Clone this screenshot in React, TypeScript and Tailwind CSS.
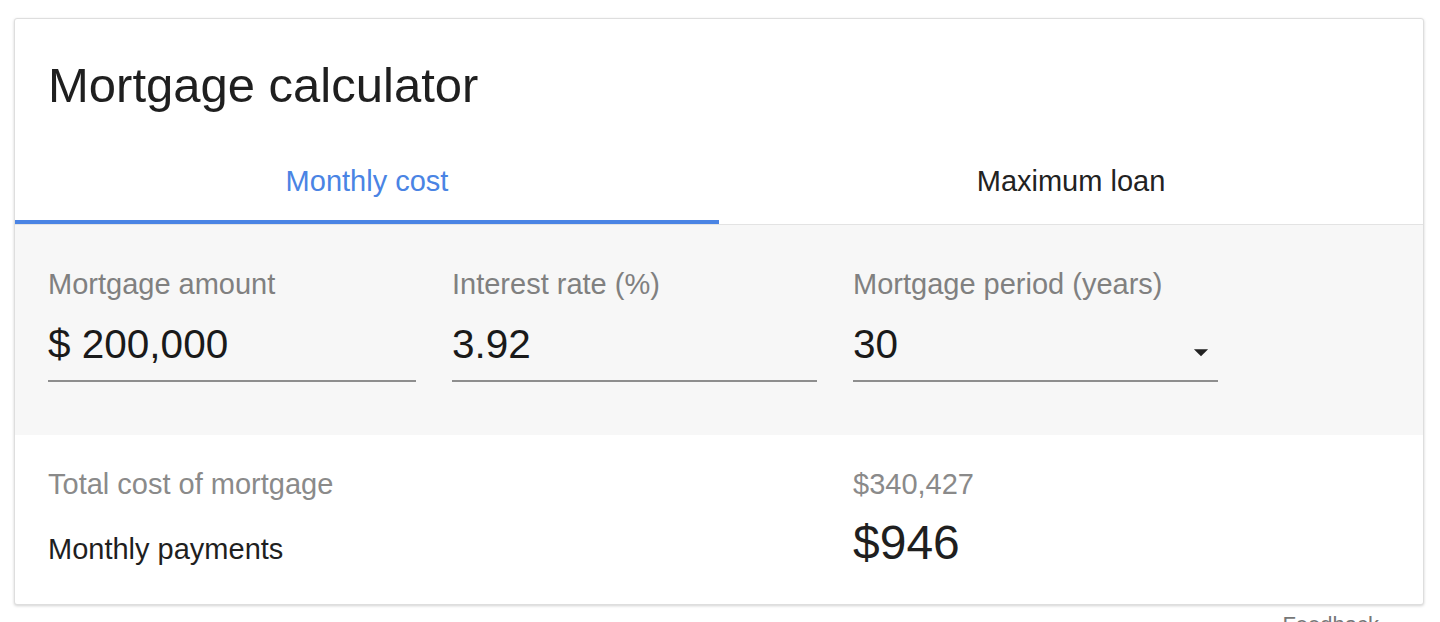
import React, { useState } from "react";

const font = { fontFamily: '"Liberation Sans", Arial, sans-serif' };

interface FieldProps {
  label: string;
  value: string;
  width: string;
  dropdown?: boolean;
}

function Field({ label, value, width, dropdown }: FieldProps) {
  return (
    <div className={`${width} flex flex-col`}>
      <div className="text-[29px] leading-[32px] text-[#808080]">{label}</div>
      <div className="mt-[20px] flex h-[48px] items-center justify-between">
        <span className="text-[40.5px] leading-[48px] text-[#1a1a1a]">{value}</span>
        {dropdown && (
          <svg viewBox="0 0 24 24" className="mt-[15px] h-[34px] w-[34px]" fill="#222">
            <path d="M7 10l5 5 5-5z" />
          </svg>
        )}
      </div>
      <div className="mt-[12px] h-[2px] bg-[#8e8e8e]" />
    </div>
  );
}

export default function App() {
  const [tab, setTab] = useState<"monthly" | "max">("monthly");

  return (
    <div className="min-h-[622px] bg-white pl-[14px] pt-[18px]" style={font}>
      <div className="w-[1410px] rounded-[3px] border border-[#dedede] bg-white shadow-[0_1px_3px_rgba(0,0,0,0.18)]">
        {/* Title */}
        <h1 className="pl-[33px] pt-[41px] text-[49px] leading-[50px] text-[#1f1f1f]">
          Mortgage calculator
        </h1>

        {/* Tabs */}
        <div className="grid grid-cols-2 border-b border-[#e3e3e3]">
          <button
            onClick={() => setTab("monthly")}
            className={`pt-[55px] pb-[23px] text-[29px] leading-[32px] border-b-4 ${
              tab === "monthly" ? "border-[#4a84e4] text-[#4a84e4]" : "border-transparent text-[#222]"
            }`}
          >
            Monthly cost
          </button>
          <button
            onClick={() => setTab("max")}
            className={`pt-[55px] pb-[23px] text-[29px] leading-[32px] border-b-4 ${
              tab === "max" ? "border-[#4a84e4] text-[#4a84e4]" : "border-transparent text-[#222]"
            }`}
          >
            Maximum loan
          </button>
        </div>

        {/* Inputs */}
        <div className="flex gap-[36px] bg-[#f7f7f7] pb-[53px] pl-[33px] pt-[43px]">
          <Field label="Mortgage amount" value="$ 200,000" width="w-[368px]" />
          <Field label="Interest rate (%)" value="3.92" width="w-[365px]" />
          <Field label="Mortgage period (years)" value="30" width="w-[365px]" dropdown />
        </div>

        {/* Results */}
        <div className="pb-[35px] pl-[33px] pt-[33px]">
          <div className="flex items-baseline">
            <div className="w-[805px] text-[29px] leading-[32px] text-[#8a8a8a]">Total cost of mortgage</div>
            <div className="text-[29px] leading-[32px] text-[#8a8a8a]">$340,427</div>
          </div>
          <div className="mt-[17px] flex items-baseline">
            <div className="w-[805px] text-[29px] leading-[32px] text-[#1f1f1f]">Monthly payments</div>
            <div className="text-[48px] leading-[52px] text-[#1f1f1f]">$946</div>
          </div>
        </div>
      </div>

      <div className="flex w-[1410px] justify-end pr-[45px] pt-[7px]">
        <span className="text-[22px] leading-[26px] text-[#777]">Feedback</span>
      </div>
    </div>
  );
}
